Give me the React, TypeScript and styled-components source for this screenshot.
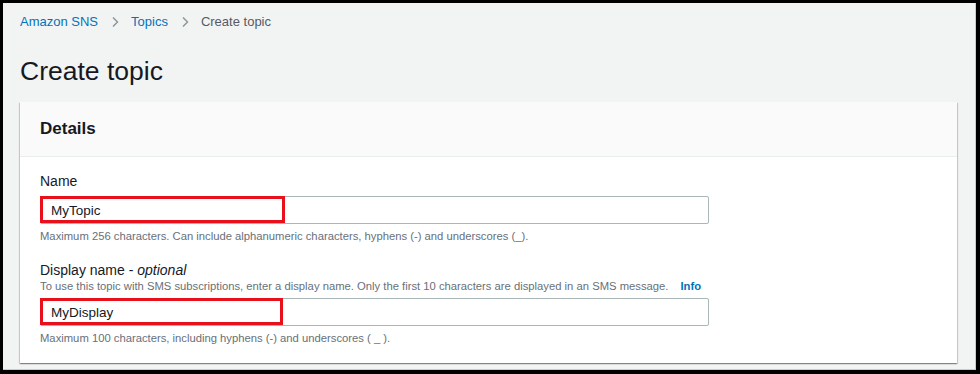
import styled, { createGlobalStyle } from 'styled-components'

const GlobalStyle = createGlobalStyle`
  html, body {
    margin: 0;
    padding: 0;
    background: #000;
  }
  body {
    font-family: "Liberation Sans", Arial, sans-serif;
    color: #16191f;
  }
`

const Frame = styled.div`
  box-sizing: border-box;
  width: 980px;
  height: 374px;
  border-style: solid;
  border-color: #000;
  border-width: 3px 4px 4px 3px;
  overflow: hidden;
`

const Page = styled.div`
  box-sizing: border-box;
  height: 100%;
  background: #f2f3f3;
  border-right: 1px solid #c9cccc;
  border-bottom: 1px solid #c9cccc;
  padding: 11px 17px 0 17px;
  display: flex;
  flex-direction: column;
`

const Crumbs = styled.nav`
  display: flex;
  align-items: center;
  height: 16px;
  font-size: 13px;
  line-height: 16px;
`

const CrumbLink = styled.a`
  color: #0073bb;
  text-decoration: none;
`

const CrumbCurrent = styled.span`
  color: #545b64;
`

const Chevron = styled.svg`
  width: 12px;
  height: 12px;
  margin: 0 10px 0 11px;
  color: #879596;
`

const Title = styled.h1`
  margin: 25px 0 0;
  font-size: 26.5px;
  font-weight: 400;
  line-height: 32px;
  color: #16191f;
`

const Panel = styled.section`
  margin-top: 15px;
  margin-right: 1px;
  background: #fff;
  box-shadow: 0 1px 1px 0 rgba(0, 28, 36, 0.3), 1px 1px 1px 0 rgba(0, 28, 36, 0.15), -1px 1px 1px 0 rgba(0, 28, 36, 0.15);
`

const PanelHeader = styled.header`
  box-sizing: border-box;
  height: 55px;
  padding: 0 20px;
  display: flex;
  align-items: center;
  background: #fafafa;
  border-bottom: 1px solid #eaeded;
`

const PanelTitle = styled.h2`
  margin: 0;
  font-size: 17px;
  font-weight: 700;
  color: #16191f;
`

const PanelBody = styled.div`
  padding: 15px 20px 18px;
  display: flex;
  flex-direction: column;
  gap: 18px;
`

const Field = styled.div`
  display: flex;
  flex-direction: column;
`

const Label = styled.label`
  font-size: 14px;
  line-height: 18px;
  color: #16191f;
`

const Optional = styled.i`
  font-style: italic;
`

const Description = styled.div`
  font-size: 11.25px;
  line-height: 14px;
  color: #687078;
`

const InfoLink = styled.a`
  margin-left: 12px;
  color: #0073bb;
  font-weight: 700;
  text-decoration: none;
`

const InputWrap = styled.div<{ $gap: number }>`
  position: relative;
  margin-top: ${({ $gap }) => $gap}px;
  width: 669px;
`

const Input = styled.input`
  box-sizing: border-box;
  width: 100%;
  height: 28px;
  padding: 0 10px;
  border: 1px solid #aab7b8;
  border-radius: 2px;
  font-family: "Liberation Sans", Arial, sans-serif;
  font-size: 13.5px;
  color: #16191f;
  background: #fff;
  outline: none;
`

const Highlight = styled.span<{ $width: number }>`
  position: absolute;
  left: 0;
  top: 0;
  box-sizing: border-box;
  width: ${({ $width }) => $width}px;
  height: 27px;
  border: 3px solid #e8101a;
  pointer-events: none;
`

const Hint = styled.div`
  margin-top: 5px;
  font-size: 11.25px;
  line-height: 14px;
  color: #687078;
`

function ChevronIcon() {
  return (
    <Chevron viewBox="0 0 12 12" fill="none" stroke="currentColor" strokeWidth="1.4">
      <path d="M4 1.5l4.5 4.5L4 10.5" />
    </Chevron>
  )
}

export default function App() {
  return (
    <>
      <GlobalStyle />
      <Frame>
        <Page>
          <Crumbs>
            <CrumbLink href="#">Amazon SNS</CrumbLink>
            <ChevronIcon />
            <CrumbLink href="#">Topics</CrumbLink>
            <ChevronIcon />
            <CrumbCurrent>Create topic</CrumbCurrent>
          </Crumbs>
          <Title>Create topic</Title>
          <Panel>
            <PanelHeader>
              <PanelTitle>Details</PanelTitle>
            </PanelHeader>
            <PanelBody>
              <Field>
                <Label>Name</Label>
                <InputWrap $gap={6}>
                  <Input defaultValue="MyTopic" />
                  <Highlight $width={245} />
                </InputWrap>
                <Hint>Maximum 256 characters. Can include alphanumeric characters, hyphens (-) and underscores (_).</Hint>
              </Field>
              <Field>
                <Label>
                  Display name - <Optional>optional</Optional>
                </Label>
                <Description>
                  To use this topic with SMS subscriptions, enter a display name. Only the first 10 characters are displayed in an SMS message.
                  <InfoLink href="#">Info</InfoLink>
                </Description>
                <InputWrap $gap={5}>
                  <Input defaultValue="MyDisplay" />
                  <Highlight $width={243} />
                </InputWrap>
                <Hint>Maximum 100 characters, including hyphens (-) and underscores ( _ ).</Hint>
              </Field>
            </PanelBody>
          </Panel>
        </Page>
      </Frame>
    </>
  )
}
